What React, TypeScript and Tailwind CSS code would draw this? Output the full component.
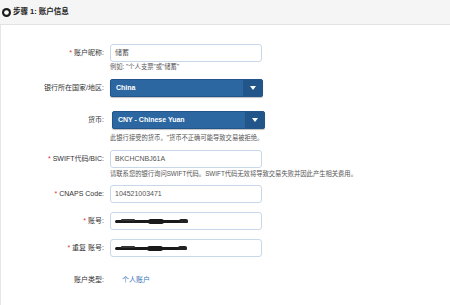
import React from 'react'

const font = { fontFamily: '"Liberation Sans", "Noto Sans CJK SC", sans-serif' }

function Label({ text, required }: { text: string; required?: boolean }) {
  return (
    <div className="w-[103px] shrink-0 text-right text-[7px] text-[#333]">
      {required && <span className="text-[#d9363e] mr-[2px]">*</span>}
      {text}
    </div>
  )
}

function TextBox({ children }: { children?: React.ReactNode }) {
  return (
    <div className="ml-[6px] h-[18px] w-[152px] rounded-[3px] border border-[#c9d8e8] bg-white flex items-center px-[4px] text-[7px] text-[#555]">
      {children}
    </div>
  )
}

function Select({ value, shift }: { value: string; shift?: boolean }) {
  return (
    <div
      className={`${shift ? 'ml-[8px]' : 'ml-[6px]'} h-[18px] w-[153px] rounded-[2px] border border-[#22568b] bg-[#2c67a2] flex items-stretch shadow-[0_1px_1px_rgba(0,0,0,0.25)]`}
    >
      <div className="flex-1 flex items-center pl-[5px] text-[7px] font-bold text-white">{value}</div>
      <div className="w-[19px] bg-[#22558a] flex items-center justify-center">
        <svg width="6" height="4" viewBox="0 0 6 4">
          <path d="M0 0 L6 0 L3 4 Z" fill="#fff" />
        </svg>
      </div>
    </div>
  )
}

function Hint({ children }: { children: React.ReactNode }) {
  return <div className="ml-[109px] text-[6.3px] leading-[10px] text-[#555] whitespace-nowrap">{children}</div>
}

function Masked({ w }: { w: number }) {
  return (
    <div className="relative h-[3px]" style={{ width: w }}>
      <div className="absolute inset-0 rounded-full bg-[#1a1a1a] blur-[0.4px]" />
      <div className="absolute left-[8%] -top-[1px] h-[2px] w-[20%] rounded-full bg-[#333] blur-[0.5px]" />
      <div className="absolute left-[45%] -top-[1px] h-[5px] w-[22%] rounded-full bg-[#1a1a1a] blur-[0.6px]" />
      <div className="absolute right-0 -top-[1px] h-[4px] w-[12%] rounded-full bg-[#222] blur-[0.5px]" />
    </div>
  )
}

export default function App() {
  return (
    <div className="w-[450px] h-[305px] overflow-hidden bg-white" style={font}>
      {/* Header */}
      <div className="h-[25px] bg-[#f5f5f5] border-b border-[#e2e2e2] flex items-center pl-[2px]">
        <svg width="9" height="9" viewBox="0 0 10 10">
          <circle cx="5" cy="5" r="5" fill="#1c1c1c" />
          <circle cx="5" cy="5" r="2.6" fill="#fff" />
        </svg>
        <span className="ml-[2px] text-[7.5px] font-bold text-[#222]">步骤 1: 账户信息</span>
      </div>

      {/* Body */}
      <div className="h-[280px] border-l border-[#e6e6e6] flex flex-col">
        <div className="mt-[19px] flex items-center">
          <Label text="账户昵称:" required />
          <TextBox>储蓄</TextBox>
        </div>
        <Hint>例如: "个人支票"或"储蓄"</Hint>

        <div className="mt-[7px] flex items-center">
          <Label text="银行所在国家/地区:" />
          <Select value="China" />
        </div>

        <div className="mt-[14px] flex items-center">
          <Label text="货币:" />
          <Select value="CNY - Chinese Yuan" shift />
        </div>
        <div className="mt-[4px]">
          <Hint>此银行接受的货币。"货币不正确可能导致交易被拒绝。</Hint>
        </div>

        <div className="mt-[7px] flex items-center">
          <Label text="SWIFT代码/BIC:" required />
          <TextBox>BKCHCNBJ61A</TextBox>
        </div>
        <div className="mt-[1px]">
          <Hint>请联系您的银行询问SWIFT代码。SWIFT代码无效将导致交易失败并因此产生相关费用。</Hint>
        </div>

        <div className="mt-[6px] flex items-center">
          <Label text="CNAPS Code:" required />
          <TextBox>104521003471</TextBox>
        </div>

        <div className="mt-[9px] flex items-center">
          <Label text="账号:" required />
          <TextBox>
            <Masked w={73} />
          </TextBox>
        </div>

        <div className="mt-[9px] flex items-center">
          <Label text="重复 账号:" required />
          <TextBox>
            <Masked w={72} />
          </TextBox>
        </div>

        <div className="mt-[18px] flex items-center">
          <Label text="账户类型:" />
          <div className="ml-[18px] text-[7px] text-[#3a78b9]">个人账户</div>
        </div>
      </div>
    </div>
  )
}
